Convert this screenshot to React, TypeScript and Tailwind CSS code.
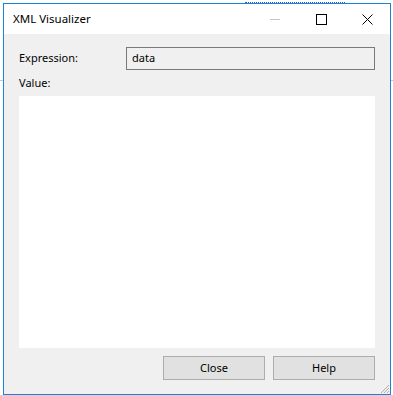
import React from 'react'

const FONT = { fontFamily: '"Noto Sans", "Open Sans", Arial, sans-serif' }

function TitleButtons() {
  return (
    <div className="flex h-full items-center">
      {/* minimize (disabled) */}
      <div className="flex h-full w-[46px] items-center justify-center">
        <svg width="10" height="10" viewBox="0 0 10 10">
          <line x1="0" y1="5.5" x2="10" y2="5.5" stroke="#c4c4c4" strokeWidth="1" />
        </svg>
      </div>
      {/* maximize */}
      <div className="flex h-full w-[46px] items-center justify-center">
        <svg width="11" height="11" viewBox="0 0 11 11">
          <rect x="0.5" y="0.5" width="10" height="10" fill="none" stroke="#000" strokeWidth="1" />
        </svg>
      </div>
      {/* close */}
      <div className="flex h-full w-[46px] items-center justify-center">
        <svg width="11" height="11" viewBox="0 0 11 11">
          <path d="M0.5 0.5 L10.5 10.5 M10.5 0.5 L0.5 10.5" stroke="#000" strokeWidth="1" fill="none" />
        </svg>
      </div>
    </div>
  )
}

export default function App() {
  return (
    <div className="relative h-[395px] w-[393px] overflow-hidden bg-white" style={FONT}>
      {/* stray background bits */}
      <div className="absolute left-[245px] top-0 h-[3px] w-[100px] border-b border-dotted border-[#3b4fd0]" />
      <div className="absolute left-0 top-[80px] h-px w-[3px] bg-[#c8c8c8]" />
      <div className="absolute right-0 top-[80px] h-px w-[3px] bg-[#c8c8c8]" />

      <div className="absolute left-[3px] top-[3px] flex h-[392px] w-[388px] flex-col border border-[#1883d7] bg-[#f0f0f0]">
        {/* title bar */}
        <div className="flex h-[30px] shrink-0 items-center justify-between bg-white">
          <span className="pl-[9px] text-[11.5px] text-black">XML Visualizer</span>
          <TitleButtons />
        </div>

        {/* body */}
        <div className="relative flex flex-1 flex-col px-[15px] pt-[13px] text-[11px] text-black">
          <div className="flex h-[23px] items-center">
            <span className="w-[107px] shrink-0">Expression:</span>
            <div className="flex h-[23px] flex-1 items-center border border-[#7a7a7a] bg-[#f0f0f0] px-[5px]">
              data
            </div>
          </div>
          <div className="mt-[6px] flex h-[15px] items-center">Value:</div>
          <div className="mt-[5px] h-[252px] bg-white" />
          <div className="mt-[8px] flex justify-end gap-[8px]">
            <button className="h-[24px] w-[102px] border border-[#adadad] bg-[#e1e1e1] text-[11px] text-black">
              Close
            </button>
            <button className="h-[24px] w-[102px] border border-[#adadad] bg-[#e1e1e1] text-[11px] text-black">
              Help
            </button>
          </div>
          {/* resize grip */}
          <svg className="absolute bottom-0 right-0" width="12" height="12" viewBox="0 0 12 12">
            <path d="M11 3 L3 11 M11 6 L6 11 M11 9 L9 11" stroke="#b0b0b0" strokeWidth="1" />
          </svg>
        </div>
      </div>
    </div>
  )
}
